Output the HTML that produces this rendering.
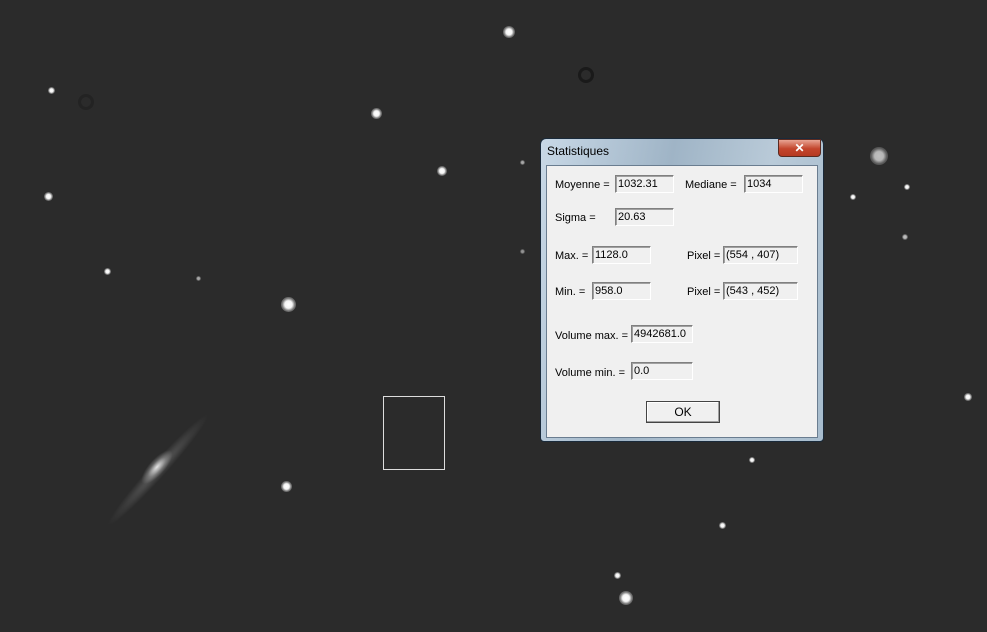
<!DOCTYPE html>
<html style="width:987px;height:632px;overflow:hidden"><head><meta charset="utf-8"><style>
html,body{margin:0;width:987px;height:632px;overflow:hidden}
body{background:#2b2b2b;position:relative;font-family:"Liberation Sans",sans-serif}
.s{position:absolute;border-radius:50%;background:radial-gradient(circle,#fff 0,#f4f4f4 35%,rgba(255,255,255,.35) 60%,rgba(255,255,255,0) 100%)}
.dlg{position:absolute;left:540px;top:138px;width:284px;height:304px;box-sizing:border-box;border:1px solid #1a2a3a;border-radius:6px 6px 4px 4px;background:linear-gradient(100deg,#c8d8e6 0%,#9fb4c6 40%,#b9cad8 70%,#a7bccd 100%)}
.title{position:absolute;left:6px;top:5px;font-size:12px;color:#000}
.x{position:absolute;left:237px;top:0;width:43px;height:18px;border-radius:0 0 4px 4px;background:linear-gradient(#e8a493,#c3452c 55%,#b53a22);border:1px solid #5a2a20;box-sizing:border-box;color:#fff;font-weight:bold;font-size:12px;text-align:center;line-height:16px}
.cl{position:absolute;left:5px;top:26px;width:272px;height:273px;background:#f0f0f0;border:1px solid #6a7d90;box-sizing:border-box}
.l{position:absolute;font-size:11px;color:#000;white-space:nowrap}
.f{position:absolute;height:18px;box-sizing:border-box;background:#f0f0f0;border:1px solid;border-color:#808080 #fff #fff #808080;box-shadow:inset 1px 1px 0 #a0a0a0;font-size:11px;line-height:16px;padding-left:2px}
.ok{position:absolute;left:99px;top:235px;width:74px;height:22px;box-sizing:border-box;border:1px solid #444;background:#f0f0f0;box-shadow:inset -1px -1px 0 #a0a0a0,inset 1px 1px 0 #fff;font-size:12px;text-align:center;line-height:20px}
</style></head><body>
<div style="position:absolute;left:150px;top:395px;width:16px;height:150px;border-radius:50%;background:radial-gradient(ellipse,rgba(255,255,255,.22),rgba(255,255,255,.06) 50%,rgba(255,255,255,0) 70%);transform:rotate(42deg)"></div>
<div style="position:absolute;left:149px;top:445px;width:16px;height:44px;border-radius:50%;background:radial-gradient(ellipse,rgba(255,255,255,.85),rgba(255,255,255,.25) 40%,rgba(255,255,255,0) 70%);transform:rotate(42deg)"></div>
<div class="s" style="left:503px;top:26px;width:12px;height:12px"></div>
<div class="s" style="left:48px;top:87px;width:7px;height:7px"></div>
<div class="s" style="left:371px;top:108px;width:11px;height:11px"></div>
<div class="s" style="left:437px;top:166px;width:10px;height:10px"></div>
<div class="s" style="left:44px;top:192px;width:9px;height:9px"></div>
<div class="s" style="left:104px;top:268px;width:7px;height:7px"></div>
<div class="s" style="left:281px;top:297px;width:15px;height:15px"></div>
<div class="s" style="left:281px;top:481px;width:11px;height:11px"></div>
<div class="s" style="left:619px;top:591px;width:14px;height:14px"></div>
<div class="s" style="left:614px;top:572px;width:7px;height:7px"></div>
<div class="s" style="left:719px;top:522px;width:7px;height:7px"></div>
<div class="s" style="left:749px;top:457px;width:6px;height:6px"></div>
<div class="s" style="left:964px;top:393px;width:8px;height:8px"></div>
<div class="s" style="left:870px;top:147px;width:18px;height:18px;opacity:.7"></div>
<div class="s" style="left:904px;top:184px;width:6px;height:6px"></div>
<div class="s" style="left:850px;top:194px;width:6px;height:6px"></div>
<div class="s" style="left:902px;top:234px;width:6px;height:6px;opacity:.7"></div>
<div class="s" style="left:196px;top:276px;width:5px;height:5px;opacity:.6"></div>
<div class="s" style="left:520px;top:160px;width:5px;height:5px;opacity:.6"></div>
<div class="s" style="left:520px;top:249px;width:5px;height:5px;opacity:.5"></div>
<div style="position:absolute;left:578px;top:67px;width:16px;height:16px;border-radius:50%;border:3px solid #1a1a1a;box-sizing:border-box"></div>
<div style="position:absolute;left:78px;top:94px;width:16px;height:16px;border-radius:50%;border:3px solid #232323;box-sizing:border-box"></div>
<div style="position:absolute;left:383px;top:396px;width:62px;height:74px;border:1px solid #ddd;box-sizing:border-box"></div>
<div class="dlg">
<div class="title">Statistiques</div>
<div class="x">✕</div>
<div class="cl">
<div class="l" style="left:8px;top:13px">Moyenne =</div><div class="f" style="left:68px;top:9px;width:59px">1032.31</div>
<div class="l" style="left:138px;top:13px">Mediane =</div><div class="f" style="left:197px;top:9px;width:59px">1034</div>
<div class="l" style="left:8px;top:46px">Sigma =</div><div class="f" style="left:68px;top:42px;width:59px">20.63</div>
<div class="l" style="left:8px;top:84px">Max. =</div><div class="f" style="left:45px;top:80px;width:59px">1128.0</div>
<div class="l" style="left:140px;top:84px">Pixel =</div><div class="f" style="left:176px;top:80px;width:75px">(554 , 407)</div>
<div class="l" style="left:8px;top:120px">Min. =</div><div class="f" style="left:45px;top:116px;width:59px">958.0</div>
<div class="l" style="left:140px;top:120px">Pixel =</div><div class="f" style="left:176px;top:116px;width:75px">(543 , 452)</div>
<div class="l" style="left:8px;top:164px">Volume max. =</div><div class="f" style="left:84px;top:159px;width:62px">4942681.0</div>
<div class="l" style="left:8px;top:201px">Volume min. =</div><div class="f" style="left:84px;top:196px;width:62px">0.0</div>
<div class="ok">OK</div>
</div></div>
</body></html>
